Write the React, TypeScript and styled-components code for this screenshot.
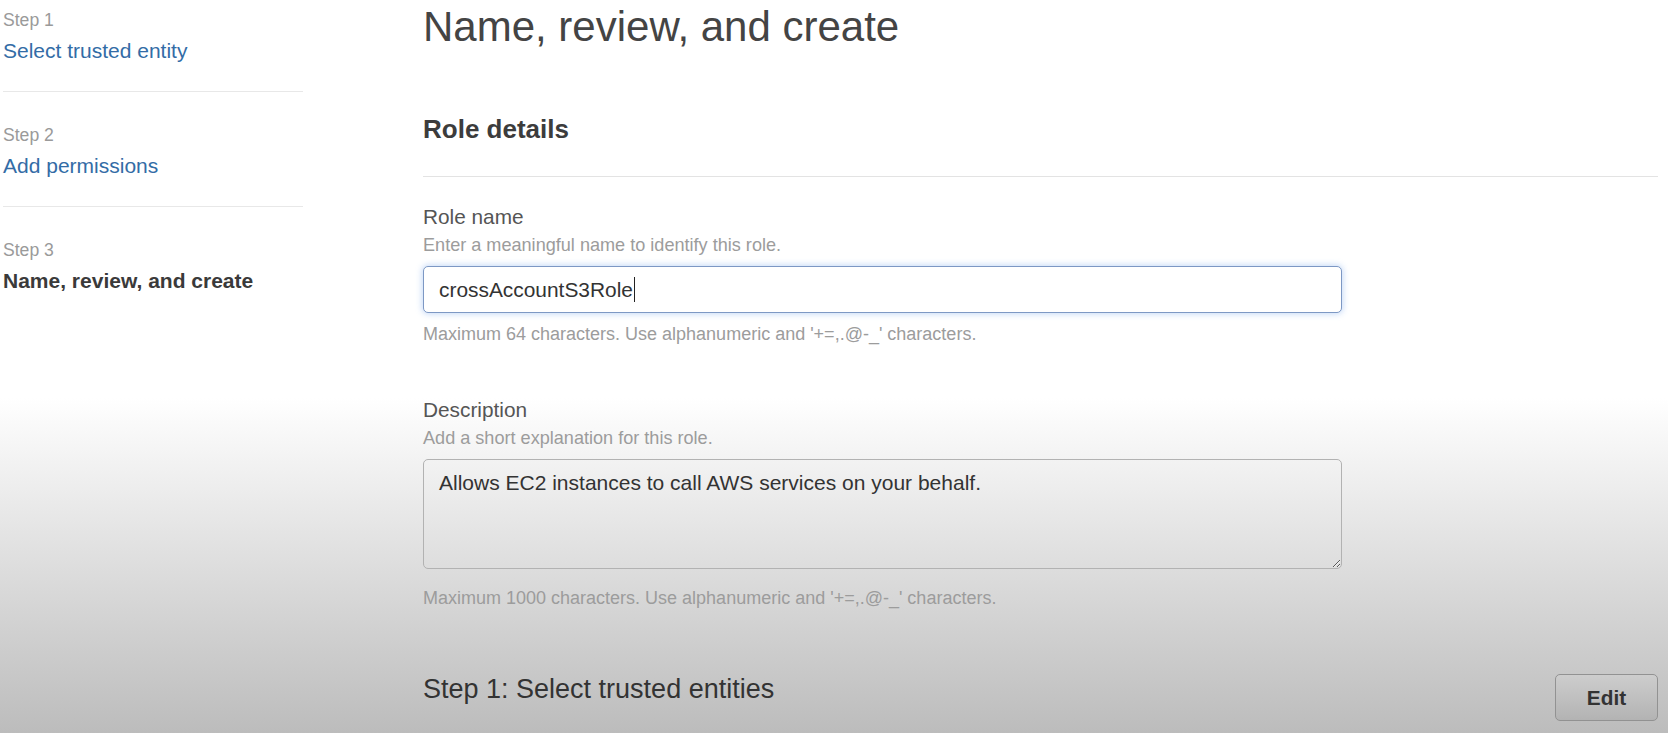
import React from "react";
import styled, { createGlobalStyle } from "styled-components";

const GlobalStyle = createGlobalStyle`
  html, body {
    margin: 0;
    padding: 0;
  }
  body {
    min-height: 733px;
    overflow: hidden;
    font-family: "Liberation Sans", Arial, sans-serif;
    background: linear-gradient(180deg, #ffffff 0px, #ffffff 398px, #bcbcbc 733px);
    background-repeat: no-repeat;
  }
  * {
    box-sizing: border-box;
  }
`;

const Page = styled.div`
  display: flex;
  align-items: flex-start;
  min-height: 733px;
`;

const Sidebar = styled.nav`
  width: 300px;
  margin-left: 3px;
  flex-shrink: 0;
  display: flex;
  flex-direction: column;
`;

const StepItem = styled.div<{ $first?: boolean; $last?: boolean }>`
  padding: ${(p) => (p.$first ? "10px" : "33px")} 0 27px;
  border-bottom: ${(p) => (p.$last ? "none" : "1px solid #e8e8e8")};
  display: flex;
  flex-direction: column;
`;

const StepLabel = styled.span`
  font-size: 17.6px;
  line-height: 20px;
  color: #9a9a9a;
`;

const StepLink = styled.a<{ $current?: boolean }>`
  display: block;
  margin-top: 8px;
  font-size: 21px;
  line-height: 26px;
  text-decoration: none;
  color: ${(p) => (p.$current ? "#3a3a3a" : "#336ca6")};
  font-weight: ${(p) => (p.$current ? 700 : 400)};
  cursor: pointer;
`;

const Content = styled.main`
  flex: 1;
  margin-left: 120px;
  margin-right: 10px;
  display: flex;
  flex-direction: column;
`;

const Title = styled.h1`
  margin: 0;
  padding-top: 2px;
  font-size: 42px;
  line-height: 50px;
  font-weight: 400;
  color: #444;
`;

const SectionTitle = styled.h2`
  margin: 61px 0 0;
  font-size: 26px;
  line-height: 32px;
  font-weight: 700;
  color: #3c3c3c;
`;

const Divider = styled.hr`
  margin: 31px 0 0;
  border: none;
  height: 1px;
  background: #e3e3e3;
`;

const Field = styled.div<{ $gap: number }>`
  margin-top: ${(p) => p.$gap}px;
  display: flex;
  flex-direction: column;
`;

const Label = styled.label`
  font-size: 20.8px;
  line-height: 24px;
  color: #555;
`;

const Hint = styled.span`
  margin-top: 5px;
  font-size: 18.1px;
  line-height: 22px;
  color: #9c9c9c;
`;

const Constraint = styled.span<{ $gap: number }>`
  margin-top: ${(p) => p.$gap}px;
  font-size: 18px;
  line-height: 22px;
  color: #9c9c9c;
`;

const InputBox = styled.div`
  margin-top: 10px;
  width: 919px;
  height: 47px;
  border: 1px solid #7d98c4;
  border-radius: 5px;
  box-shadow: 0 0 6px 1px rgba(110, 160, 235, 0.4);
  background: #fff;
  padding: 0 15px;
  display: flex;
  align-items: center;
  font-size: 20.9px;
  color: #333;
`;

const Caret = styled.span`
  display: inline-block;
  width: 1.5px;
  height: 25px;
  margin-left: 1px;
  background: #222;
`;

const TextArea = styled.textarea`
  margin-top: 10px;
  display: block;
  width: 919px;
  height: 110px;
  padding: 11px 15px;
  font-family: "Liberation Sans", Arial, sans-serif;
  font-size: 21px;
  line-height: 24px;
  color: #333;
  background: transparent;
  border: 1px solid #b2b2b2;
  border-radius: 5px;
  outline: none;
  resize: both;
`;

const StepRow = styled.div`
  margin-top: 65px;
  display: flex;
  justify-content: space-between;
  align-items: flex-start;
`;

const StepHeading = styled.h3`
  margin: 0;
  font-size: 27px;
  line-height: 30px;
  font-weight: 400;
  color: #333;
`;

const EditButton = styled.button`
  width: 103px;
  height: 47px;
  border: 1px solid #929292;
  border-radius: 5px;
  background: linear-gradient(180deg, #cdcdcd 0%, #b3b3b3 100%);
  font-family: "Liberation Sans", Arial, sans-serif;
  font-size: 20.8px;
  font-weight: 700;
  color: #333;
  cursor: pointer;
`;

const steps = [
  { label: "Step 1", title: "Select trusted entity" },
  { label: "Step 2", title: "Add permissions" },
  { label: "Step 3", title: "Name, review, and create", current: true },
];

export default function App() {
  return (
    <>
      <GlobalStyle />
      <Page>
        <Sidebar>
          {steps.map((s, i) => (
            <StepItem key={s.label} $first={i === 0} $last={i === steps.length - 1}>
              <StepLabel>{s.label}</StepLabel>
              <StepLink $current={s.current}>{s.title}</StepLink>
            </StepItem>
          ))}
        </Sidebar>
        <Content>
          <Title>Name, review, and create</Title>
          <SectionTitle>Role details</SectionTitle>
          <Divider />
          <Field $gap={28}>
            <Label>Role name</Label>
            <Hint>Enter a meaningful name to identify this role.</Hint>
            <InputBox role="textbox">
              crossAccountS3Role
              <Caret />
            </InputBox>
            <Constraint $gap={10}>
              Maximum 64 characters. Use alphanumeric and '+=,.@-_' characters.
            </Constraint>
          </Field>
          <Field $gap={53}>
            <Label>Description</Label>
            <Hint>Add a short explanation for this role.</Hint>
            <TextArea defaultValue="Allows EC2 instances to call AWS services on your behalf." />
            <Constraint $gap={18}>
              Maximum 1000 characters. Use alphanumeric and '+=,.@-_' characters.
            </Constraint>
          </Field>
          <StepRow>
            <StepHeading>Step 1: Select trusted entities</StepHeading>
            <EditButton>Edit</EditButton>
          </StepRow>
        </Content>
      </Page>
    </>
  );
}
